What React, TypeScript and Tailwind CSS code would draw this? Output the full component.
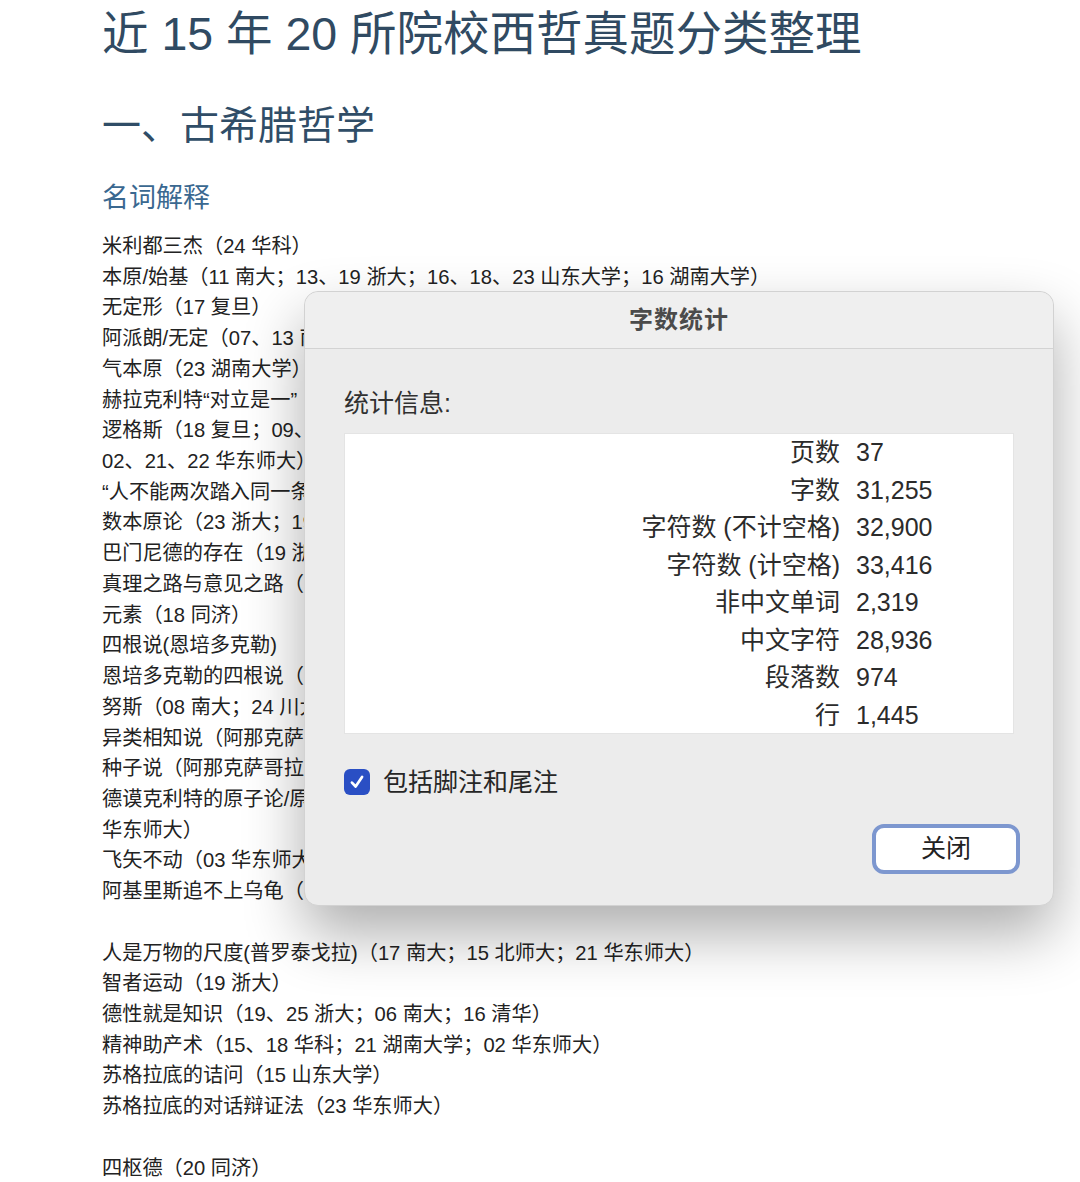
const lines: string[] = [
  "米利都三杰（24 华科）",
  "本原/始基（11 南大；13、19 浙大；16、18、23 山东大学；16 湖南大学）",
  "无定形（17 复旦）",
  "阿派朗/无定（07、13 南大）",
  "气本原（23 湖南大学）",
  "赫拉克利特“对立是一”",
  "逻格斯（18 复旦；09、15",
  "02、21、22 华东师大）",
  "“人不能两次踏入同一条河流”",
  "数本原论（23 浙大；19",
  "巴门尼德的存在（19 浙大",
  "真理之路与意见之路（22",
  "元素（18 同济）",
  "四根说(恩培多克勒)",
  "恩培多克勒的四根说（20",
  "努斯（08 南大；24 川大）",
  "异类相知说（阿那克萨哥",
  "种子说（阿那克萨哥拉",
  "德谟克利特的原子论/原子",
  "华东师大）",
  "飞矢不动（03 华东师大）",
  "阿基里斯追不上乌龟（03",
  "",
  "人是万物的尺度(普罗泰戈拉)（17 南大；15 北师大；21 华东师大）",
  "智者运动（19 浙大）",
  "德性就是知识（19、25 浙大；06 南大；16 清华）",
  "精神助产术（15、18 华科；21 湖南大学；02 华东师大）",
  "苏格拉底的诘问（15 山东大学）",
  "苏格拉底的对话辩证法（23 华东师大）",
  "",
  "四枢德（20 同济）",
];

const stats: [string, string][] = [
  ["页数", "37"],
  ["字数", "31,255"],
  ["字符数 (不计空格)", "32,900"],
  ["字符数 (计空格)", "33,416"],
  ["非中文单词", "2,319"],
  ["中文字符", "28,936"],
  ["段落数", "974"],
  ["行", "1,445"],
];

function WordCountDialog() {
  return (
    <div className="absolute left-[304px] top-[291px] w-[750px] h-[615px] rounded-[14px] bg-[#ececec] border border-[#d2d2d2] shadow-[0_28px_60px_rgba(0,0,0,0.32)] flex flex-col">
      <div className="h-[57px] shrink-0 flex items-center justify-center border-b border-[#d3d3d3] rounded-t-[14px] bg-[#efefef]">
        <span className="text-[24px] font-bold text-[#4b4b4b] tracking-[1px]">字数统计</span>
      </div>
      <div className="px-[39px] pt-[40px] flex flex-col">
        <div className="text-[25px] leading-[28px] text-[#303030]">统计信息:</div>
        <div className="mt-[16px] w-[670px] h-[301px] bg-white border border-[#e4e4e4] text-[25px] leading-[37.5px] text-[#2b2b2b]">
          {stats.map(([k, v]) => (
            <div key={k} className="flex">
              <div className="w-[495px] text-right whitespace-nowrap">{k}</div>
              <div className="pl-[16px]">{v}</div>
            </div>
          ))}
        </div>
        <div className="mt-[34px] flex items-center gap-[13px]">
          <div className="w-[26px] h-[26px] rounded-[6px] bg-[#2a4fc4] flex items-center justify-center">
            <svg viewBox="0 0 16 16" className="w-[18px] h-[18px]" fill="none" stroke="white" strokeWidth="2.4" strokeLinecap="round" strokeLinejoin="round">
              <path d="M3.5 8.5 L6.8 12 L12.5 3.5" />
            </svg>
          </div>
          <span className="text-[25px] leading-[28px] text-[#262626]">包括脚注和尾注</span>
        </div>
        <div className="mt-[28px] flex justify-end">
          <button className="mr-[-6px] w-[148px] h-[50px] rounded-[12px] border-[4px] border-[#7d97cf] bg-white flex items-center justify-center text-[25px] text-[#222]">
            关闭
          </button>
        </div>
      </div>
    </div>
  );
}

export default function App() {
  return (
    <div className="relative w-[1080px] h-[1182px] overflow-hidden bg-white font-['Liberation_Sans','Noto_Sans_CJK_SC',sans-serif]">
      <div className="pl-[102px] pt-[11px]">
        <h1 className="text-[46.5px] leading-[46px] text-[#304a62]">近 15 年 20 所院校西哲真题分类整理</h1>
        <h2 className="mt-[49px] text-[39px] leading-[39px] text-[#304d67]">一、古希腊哲学</h2>
        <h3 className="mt-[40px] text-[27px] leading-[27px] text-[#3a6890]">名词解释</h3>
        <div className="mt-[19px] text-[20.2px] leading-[30.73px] text-[#222]">
          {lines.map((l, i) => (
            <div key={i} className="h-[30.73px] whitespace-nowrap">{l}</div>
          ))}
        </div>
      </div>
      <WordCountDialog />
    </div>
  );
}
